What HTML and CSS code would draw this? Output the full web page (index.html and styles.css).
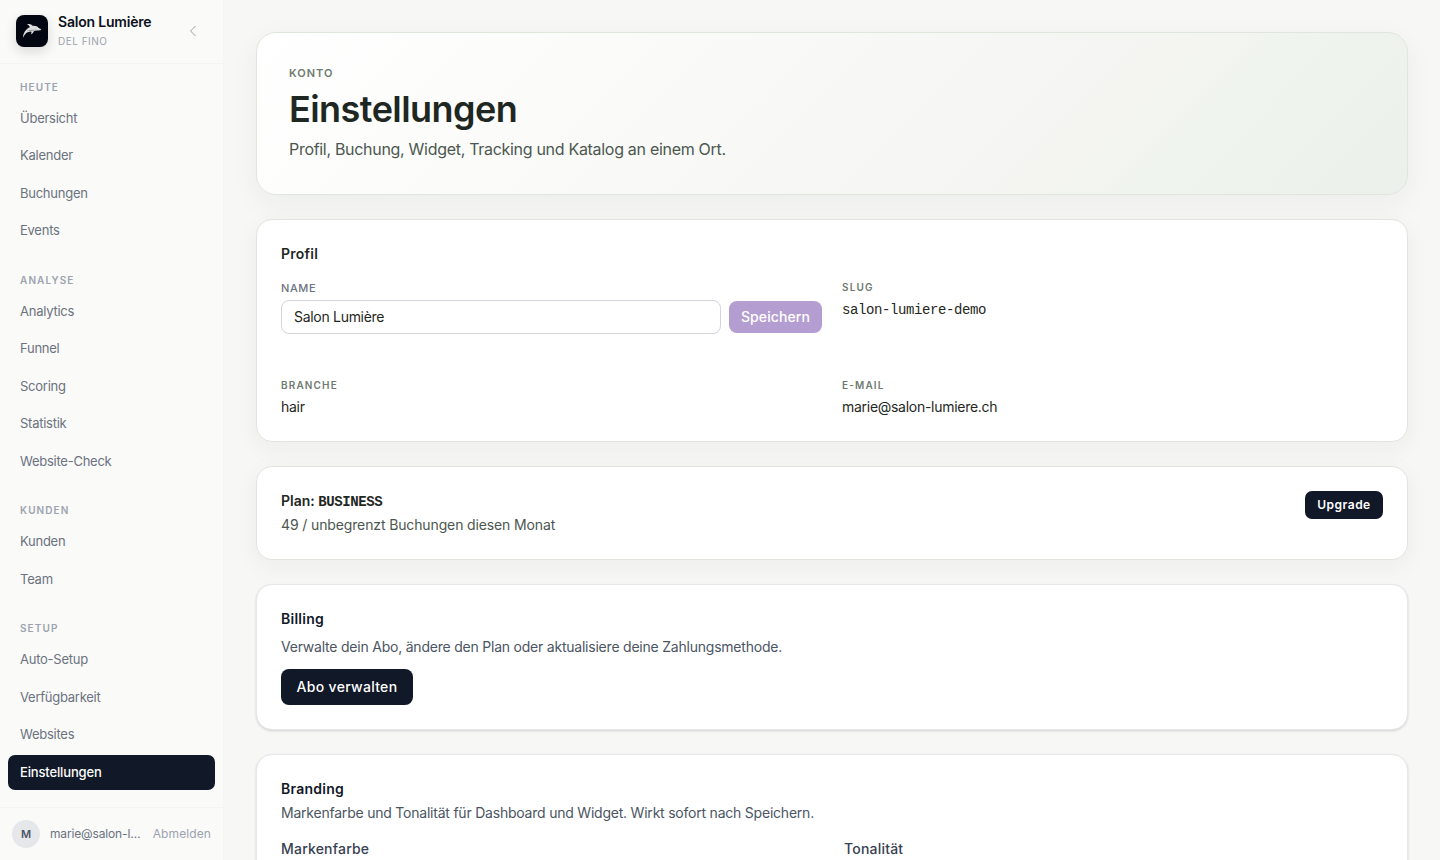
FILE: index.html
```html
<!DOCTYPE html>
<html lang="de">
<head>
    <meta charset="utf-8">
    <title>Einstellungen</title>
    <link rel="stylesheet" href="styles.css">
</head>
<body>
    <div class="app">
        <aside class="sidebar">
            <div class="brand">
                <div class="logo">
                    <svg width="32" height="32" viewBox="0 0 32 32">
                        <path fill="#dcdcdc" d="M6.900 23C7 19.500 8.200 16.600 10.500 14.500C11.600 13.400 12.700 12.700 13.800 12.300C13.400 10.900 12.500 9.700 11 9.200C13.300 8.900 15.500 9.500 16.900 10.900C19.400 10.700 21.500 11.500 22.700 13C23.900 13.500 25 14.100 25.300 15C24.100 15.500 22.600 15.500 21.300 15.400C19.900 15.500 18.500 15.800 17.600 16.400C17.200 17.700 16.300 18.700 15.100 19.200C15.400 18.300 15.500 17.500 15.300 16.600C12.500 16.600 10.500 17.600 9.200 19.200C8.200 20.200 7.400 21.600 6.900 23Z"/>
                        <path fill="#8d9095" d="M11 16C13 14.300 17 14.700 20.700 14.400C17.500 16.200 13.500 15.500 11 16Z"/>
                    </svg>
                </div>
                <div class="brand-text">
                    <div class="brand-name">Salon Lumière</div>
                    <div class="brand-sub">DEL FINO</div>
                </div>
                <svg class="collapse" width="16" height="16" viewBox="0 0 16 16"><path d="M10.500 3L5.500 8l5 5"/></svg>
            </div>
            <nav class="nav">
                <div class="group">
                    <h3>HEUTE</h3>
                    <a>Übersicht</a>
                    <a>Kalender</a>
                    <a>Buchungen</a>
                    <a>Events</a>
                </div>
                <div class="group">
                    <h3>ANALYSE</h3>
                    <a>Analytics</a>
                    <a>Funnel</a>
                    <a>Scoring</a>
                    <a>Statistik</a>
                    <a>Website-Check</a>
                </div>
                <div class="group">
                    <h3>KUNDEN</h3>
                    <a>Kunden</a>
                    <a>Team</a>
                </div>
                <div class="group">
                    <h3>SETUP</h3>
                    <a>Auto-Setup</a>
                    <a>Verfügbarkeit</a>
                    <a>Websites</a>
                    <a class="active">Einstellungen</a>
                </div>
            </nav>
            <div class="user">
                <div class="avatar">M</div>
                <div class="user-mail">marie@salon-l…</div>
                <a class="logout">Abmelden</a>
            </div>
        </aside>

        <main class="main">
            <section class="hero">
                <div class="eyebrow">KONTO</div>
                <h1>Einstellungen</h1>
                <p>Profil, Buchung, Widget, Tracking und Katalog an einem Ort.</p>
            </section>

            <section class="card profile">
                <h2>Profil</h2>
                <div class="profile-grid">
                    <div>
                        <label class="name-label" for="name">NAME</label>
                        <div class="name-row">
                            <input id="name" type="text" value="Salon Lumière">
                            <button class="save">Speichern</button>
                        </div>
                    </div>
                    <div>
                        <div class="label">SLUG</div>
                        <div class="value mono">salon-lumiere-demo</div>
                    </div>
                    <div>
                        <div class="label">BRANCHE</div>
                        <div class="value">hair</div>
                    </div>
                    <div>
                        <div class="label">E-MAIL</div>
                        <div class="value">marie@salon-lumiere.ch</div>
                    </div>
                </div>
            </section>

            <section class="card plan">
                <div>
                    <h2>Plan: <span class="mono">BUSINESS</span></h2>
                    <p class="usage">49 / unbegrenzt Buchungen diesen Monat</p>
                </div>
                <button class="upgrade">Upgrade</button>
            </section>

            <section class="card plain billing">
                <h2>Billing</h2>
                <p>Verwalte dein Abo, ändere den Plan oder aktualisiere deine Zahlungsmethode.</p>
                <button class="manage">Abo verwalten</button>
            </section>

            <section class="card plain branding">
                <h2>Branding</h2>
                <p>Markenfarbe und Tonalität für Dashboard und Widget. Wirkt sofort nach Speichern.</p>
                <div class="branding-grid">
                    <div>Markenfarbe</div>
                    <div>Tonalität</div>
                </div>
            </section>
        </main>
    </div>
</body>
</html>
```
FILE: styles.css
```css
* {
    box-sizing: border-box;
}
body {
    margin: 0;
    height: 100vh;
    overflow: hidden;
    background: #f7f7f5;
    color: #1f2723;
    font-family: Inter, "Liberation Sans", sans-serif;
    font-size: 14px;
    line-height: 20px;
}
h1, h2, h3, p {
    margin: 0;
}
button, input {
    font: inherit;
}
button {
    border: 0;
    padding: 0;
    color: #fff;
    background: #111827;
    white-space: nowrap;
}
.app {
    display: flex;
    height: 100vh;
}

/* sidebar */
.sidebar {
    display: flex;
    flex-direction: column;
    flex: none;
    width: 224px;
    background: #fafaf8;
    border-right: 1px solid #f6f6f5;
}
.brand {
    display: flex;
    align-items: center;
    flex: none;
    height: 64px;
    padding: 0 22px 1px 16px;
    border-bottom: 1px solid #f3f4f4;
}
.logo {
    width: 32px;
    height: 32px;
    border-radius: 8px;
    background: #020610;
    box-shadow: 0 4px 12px rgba(17, 24, 39, 0.15);
    overflow: hidden;
}
.logo svg {
    display: block;
}
.brand-text {
    flex: 1;
    margin-left: 10px;
    white-space: nowrap;
}
.brand-name {
    font-weight: 600;
    line-height: 18px;
    color: #0b101b;
    letter-spacing: -0.2px;
}
.brand-sub {
    margin-top: 2px;
    font-size: 10px;
    line-height: 16px;
    letter-spacing: 0.5px;
    color: #9ca3af;
}
.collapse {
    fill: none;
    stroke: #9ca3af;
    stroke-width: 1;
}
.nav {
    flex: 1;
    padding: 15.5px 8px 0;
}
.group {
    display: flex;
    flex-direction: column;
    gap: 2px;
    margin-bottom: 24px;
}
.group:last-child {
    margin-bottom: 0;
}
.group h3 {
    margin: 0 12px 4px;
    font-size: 10px;
    line-height: 15px;
    font-weight: 600;
    letter-spacing: 1.1px;
    color: #9ca3af;
}
.group a {
    height: 35.5px;
    padding: 0 12px;
    border-radius: 7px;
    font-size: 13px;
    line-height: 35.5px;
    letter-spacing: -0.25px;
    color: #6b7280;
}
.group a.active {
    background: #111827;
    color: #fff;
    font-weight: 500;
    letter-spacing: -0.15px;
}
.user {
    display: flex;
    align-items: center;
    flex: none;
    height: 53px;
    padding: 0 12px;
    border-top: 1px solid #f3f4f4;
    font-size: 12px;
}
.avatar {
    flex: none;
    width: 28px;
    height: 28px;
    border-radius: 50%;
    background: #e5e7eb;
    color: #4b5563;
    font-size: 11px;
    line-height: 28px;
    font-weight: 600;
    text-align: center;
}
.user-mail {
    flex: 1;
    margin-left: 10px;
    white-space: nowrap;
    letter-spacing: -0.15px;
    color: #6b7280;
}
.logout {
    letter-spacing: 0.1px;
    color: #9ca3af;
}

/* content */
.main {
    display: flex;
    flex-direction: column;
    flex: 1;
    gap: 24px;
    padding: 32px;
}
.main > section {
    flex: none;
}
.hero {
    height: 163px;
    padding: 32px;
    border: 1px solid #dfe7dd;
    border-radius: 20px;
    background: linear-gradient(135deg, #fff 0%, #f4f5f1 72%, #eff4ee 80%, #ebf1ea 100%);
    box-shadow: 0 8px 28px rgba(31, 39, 35, 0.05);
}
.eyebrow {
    font-size: 11px;
    line-height: 16px;
    font-weight: 600;
    letter-spacing: 1px;
    color: #6f7a70;
}
.hero h1 {
    margin-top: 8px;
    font-size: 36px;
    line-height: 40px;
    font-weight: 600;
    letter-spacing: -0.55px;
}
.hero p {
    margin-top: 8px;
    font-size: 16px;
    line-height: 24px;
    letter-spacing: -0.3px;
    color: #4c574f;
}
.card {
    padding: 24px;
    border: 1px solid #e0e6de;
    border-radius: 16px;
    background: #fff;
    box-shadow: 0 6px 24px rgba(31, 39, 35, 0.05);
}
.card h2 {
    font-size: 14px;
    line-height: 20px;
    font-weight: 600;
    letter-spacing: 0.25px;
}
.card.plain {
    border-color: #e5e7eb;
    box-shadow: 0 1px 3px rgba(0, 0, 0, 0.1), 0 1px 2px rgba(0, 0, 0, 0.06);
}
.plain h2 {
    color: #111827;
}
.plain p {
    letter-spacing: -0.22px;
    color: #4b5563;
}
.profile-grid {
    display: grid;
    grid-template-columns: 1fr 1fr;
    grid-template-rows: 78px 39px;
    gap: 20px;
    margin-top: 16px;
}
.label {
    font-size: 10px;
    line-height: 15px;
    font-weight: 600;
    letter-spacing: 1.15px;
    color: #6f7a70;
}
.name-label {
    display: block;
    font-size: 11px;
    line-height: 16px;
    font-weight: 500;
    letter-spacing: 0.6px;
    color: #6b7280;
}
.name-row {
    display: flex;
    align-items: center;
    gap: 8px;
    margin-top: 4px;
}
.name-row input {
    flex: 1;
    min-width: 0;
    height: 34px;
    padding: 0 12px 1px;
    border: 1px solid #d1d5db;
    border-radius: 8px;
    letter-spacing: -0.3px;
    color: #1f2723;
    background: #fff;
}
.save {
    width: 93px;
    height: 32px;
    border-radius: 8px;
    background: #b49dd0;
    font-weight: 500;
    letter-spacing: 0.1px;
}
.value {
    margin-top: 4px;
    letter-spacing: -0.28px;
}
.card .mono {
    font-family: "Liberation Mono", monospace;
    letter-spacing: -0.4px;
}
.value.mono {
    margin-top: 5px;
}
.plan {
    display: flex;
    align-items: flex-start;
    justify-content: space-between;
    height: 94px;
}
.plan h2 {
    height: 20px;
    letter-spacing: 0;
}
.usage {
    margin-top: 4px;
    letter-spacing: -0.13px;
    color: #4c574f;
}
.upgrade {
    width: 78px;
    height: 28px;
    border-radius: 7px;
    font-size: 12px;
    font-weight: 600;
    letter-spacing: 0.5px;
}
.billing {
    height: 146px;
}
.billing p {
    margin-top: 8px;
}
.manage {
    width: 132px;
    height: 36px;
    margin-top: 12px;
    border-radius: 8px;
    font-weight: 500;
    letter-spacing: 0.3px;
}
.branding p {
    margin-top: 4px;
}
.branding-grid {
    display: grid;
    grid-template-columns: 1fr 1fr;
    gap: 24px;
    margin-top: 16px;
    font-weight: 500;
    letter-spacing: 0.2px;
    color: #374151;
}
```
